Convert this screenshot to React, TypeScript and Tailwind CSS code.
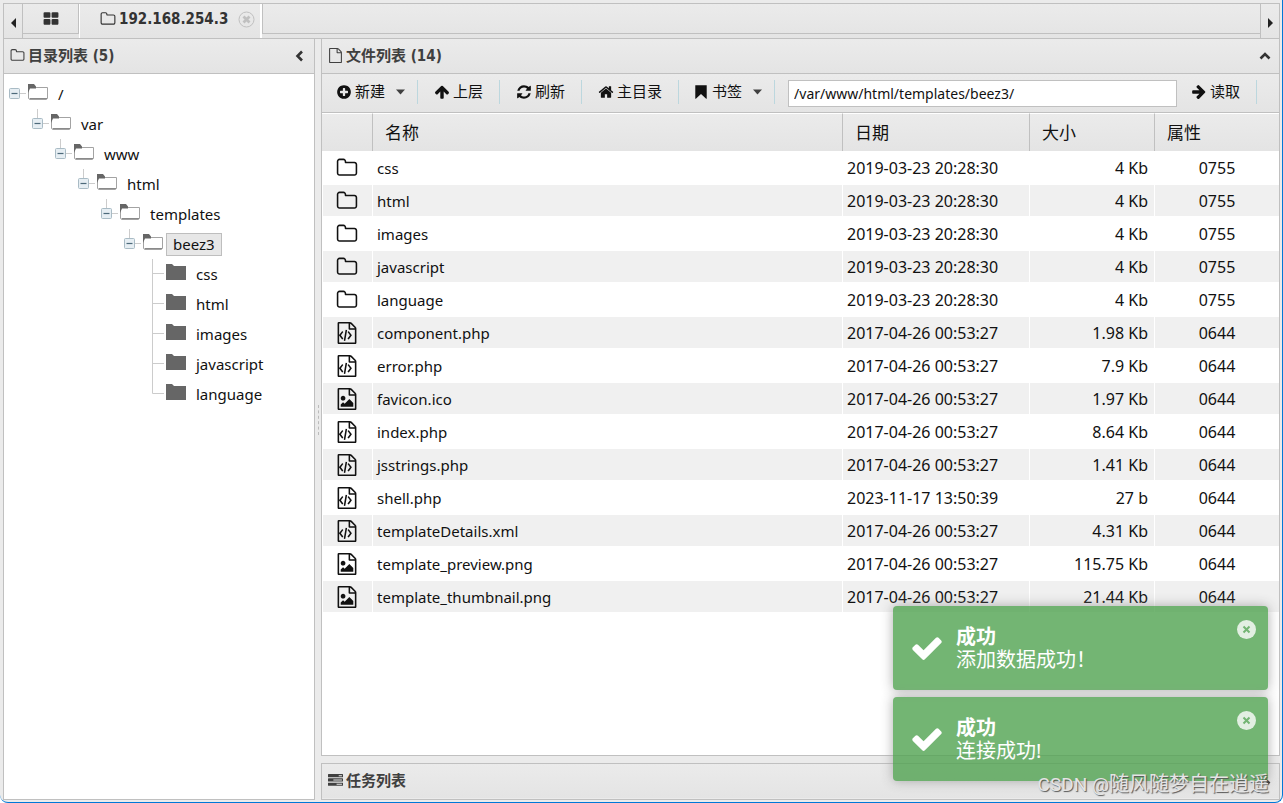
import React, { useState } from 'react'
import type { ReactNode } from 'react'

const FILE_BASE =
  'M1596 380q28 28 48 76t20 88v1152q0 40-28 68t-68 28h-1344q-40 0-68-28t-28-68v-1600q0-40 28-68t68-28h896q40 0 88 20t76 48zm-444-244v376h376q-10-29-22-41l-313-313q-12-12-41-22zm384 1528v-1024h-416q-40 0-68-28t-28-68v-416h-768v1536h1280z'

const ICONS = {
  grid: 'M832 1024v384q0 52-38 90t-90 38h-512q-52 0-90-38t-38-90v-384q0-52 38-90t90-38h512q52 0 90 38t38 90zm0-768v384q0 52-38 90t-90 38h-512q-52 0-90-38t-38-90v-384q0-52 38-90t90-38h512q52 0 90 38t38 90zm896 768v384q0 52-38 90t-90 38h-512q-52 0-90-38t-38-90v-384q0-52 38-90t90-38h512q52 0 90 38t38 90zm0-768v384q0 52-38 90t-90 38h-512q-52 0-90-38t-38-90v-384q0-52 38-90t90-38h512q52 0 90 38t38 90z',
  folder:
    'M1600 1312v-704q0-40-28-68t-68-28h-704q-40 0-68-28t-28-68v-64q0-40-28-68t-68-28h-320q-40 0-68 28t-28 68v960q0 40 28 68t68 28h1216q40 0 68-28t28-68zm128-704v704q0 92-66 158t-158 66h-1216q-92 0-158-66t-66-158v-960q0-92 66-158t158-66h320q92 0 158 66t66 158v32h672q92 0 158 66t66 158z',
  file: FILE_BASE,
  code:
    FILE_BASE +
    'M480 768q8-11 21-12.5t24 6.5l51 38q11 8 12.5 21t-6.5 24l-182 243 182 243q8 11 6.5 24t-12.5 21l-51 38q-11 8-24 6.5t-21-12.5l-226-301q-14-19 0-38zm802 301q14 19 0 38l-226 301q-8 11-21 12.5t-24-6.5l-51-38q-11-8-12.5-21t6.5-24l182-243-182-243q-8-11-6.5-24t12.5-21l51-38q11-8 24-6.5t21 12.5zm-620 461q-13-2-20.5-13t-5.5-24l138-831q2-13 13-20.5t24-5.5l63 10q13 2 20.5 13t5.5 24l-138 831q-2 13-13 20.5t-24 5.5z',
  image:
    FILE_BASE +
    'M1408 1216v320h-1024v-192l192-192 128 128 384-384zM576 1024q-80 0-136-56t-56-136 56-136 136-56 136 56 56 136-56 136-136 56z',
  plus: 'M1344 960v-128q0-26-19-45t-45-19h-256v-256q0-26-19-45t-45-19h-128q-26 0-45 19t-19 45v256h-256q-26 0-45 19t-19 45v128q0 26 19 45t45 19h256v256q0 26 19 45t45 19h128q26 0 45-19t19-45v-256h256q26 0 45-19t19-45zm320-64q0 209-103 385.5t-279.5 279.5-385.5 103-385.5-103-279.5-279.5-103-385.5 103-385.5 279.5-279.5 385.5-103 385.5 103 279.5 279.5 103 385.5z',
  up: 'M1675 971q0 51-37 90l-75 75q-38 38-91 38-54 0-90-38l-294-293v704q0 52-37.5 84.5t-90.5 32.5h-128q-53 0-90.5-32.5t-37.5-84.5v-704l-294 293q-36 38-90 38t-90-38l-75-75q-38-38-38-90 0-53 38-91l651-651q35-37 90-37 54 0 91 37l651 651q37 39 37 91z',
  refresh:
    'M1639 1056q0 5-1 7-64 268-268 434.5t-478 166.5q-146 0-282.5-55t-243.5-157l-129 129q-19 19-45 19t-45-19-19-45v-448q0-26 19-45t45-19h448q26 0 45 19t19 45-19 45l-137 137q71 66 161 102t187 36q134 0 250-65t186-179q11-17 53-117 8-23 30-23h192q13 0 22.5 9.5t9.5 22.5zm25-800v448q0 26-19 45t-45 19h-448q-26 0-45-19t-19-45 19-45l138-138q-148-137-349-137-134 0-250 65t-186 179q-11 17-53 117-8 23-30 23h-199q-13 0-22.5-9.5t-9.5-22.5v-7q65-268 270-434.5t480-166.5q146 0 284 55.5t245 156.5l130-129q19-19 45-19t45 19 19 45z',
  home: 'M1472 992v480q0 26-19 45t-45 19h-384v-384h-256v384h-384q-26 0-45-19t-19-45v-480q0-1 .5-3t.5-3l575-474 575 474q1 2 1 6zm223-69l-62 74q-8 9-21 11h-3q-13 0-21-7l-692-577-692 577q-12 8-24 7-13-2-21-11l-62-74q-8-10-7-23.5t11-21.5l719-599q32-26 76-26t76 26l244 204v-195q0-14 9-23t23-9h192q14 0 23 9t9 23v408l219 182q10 8 11 21.5t-7 23.5z',
  bookmark: 'M256 128h1280v1536h-64l-576-540-576 540h-64z',
  tasks:
    'M1024 1408h640v-128h-640v128zm-384-512h1024v-128h-1024v128zm640-512h384v-128h-384v128zm512 832v256q0 26-19 45t-45 19h-1664q-26 0-45-19t-19-45v-256q0-26 19-45t45-19h1664q26 0 45 19t19 45zm0-512v256q0 26-19 45t-45 19h-1664q-26 0-45-19t-19-45v-256q0-26 19-45t45-19h1664q26 0 45 19t19 45zm0-512v256q0 26-19 45t-45 19h-1664q-26 0-45-19t-19-45v-256q0-26 19-45t45-19h1664q26 0 45 19t19 45z',
  check:
    'M1671 566q0 40-28 68l-724 724-136 136q-28 28-68 28t-68-28l-136-136-362-362q-28-28-28-68t28-68l136-136q28-28 68-28t68 28l294 295 656-657q28-28 68-28t68 28l136 136q28 28 28 68z',
}

type IconName = keyof typeof ICONS

function Icon({ name, className }: { name: IconName; className: string }) {
  return (
    <svg viewBox="0 0 1792 1792" fill="currentColor" fillRule="evenodd" className={`shrink-0 ${className}`}>
      <path d={ICONS[name]} />
    </svg>
  )
}

function Caret() {
  return (
    <svg width="9" height="6" viewBox="0 0 9 6" className="ml-2 shrink-0 text-[#404040]">
      <path d="M0 .5h9L4.500 5.500z" fill="currentColor" />
    </svg>
  )
}

interface TreeNode {
  name: string
  children?: TreeNode[]
}

const tree: TreeNode = {
  name: '/',
  children: [{
    name: 'var',
    children: [{
      name: 'www',
      children: [{
        name: 'html',
        children: [{
          name: 'templates',
          children: [{
            name: 'beez3',
            children: [
              { name: 'css' },
              { name: 'html' },
              { name: 'images' },
              { name: 'javascript' },
              { name: 'language' },
            ],
          }],
        }],
      }],
    }],
  }],
}

interface FileRow {
  icon: IconName
  name: string
  date: string
  size: string
  mode: string
}

const files: FileRow[] = [
  { icon: 'folder', name: 'css', date: '2019-03-23 20:28:30', size: '4 Kb', mode: '0755' },
  { icon: 'folder', name: 'html', date: '2019-03-23 20:28:30', size: '4 Kb', mode: '0755' },
  { icon: 'folder', name: 'images', date: '2019-03-23 20:28:30', size: '4 Kb', mode: '0755' },
  { icon: 'folder', name: 'javascript', date: '2019-03-23 20:28:30', size: '4 Kb', mode: '0755' },
  { icon: 'folder', name: 'language', date: '2019-03-23 20:28:30', size: '4 Kb', mode: '0755' },
  { icon: 'code', name: 'component.php', date: '2017-04-26 00:53:27', size: '1.98 Kb', mode: '0644' },
  { icon: 'code', name: 'error.php', date: '2017-04-26 00:53:27', size: '7.9 Kb', mode: '0644' },
  { icon: 'image', name: 'favicon.ico', date: '2017-04-26 00:53:27', size: '1.97 Kb', mode: '0644' },
  { icon: 'code', name: 'index.php', date: '2017-04-26 00:53:27', size: '8.64 Kb', mode: '0644' },
  { icon: 'code', name: 'jsstrings.php', date: '2017-04-26 00:53:27', size: '1.41 Kb', mode: '0644' },
  { icon: 'code', name: 'shell.php', date: '2023-11-17 13:50:39', size: '27 b', mode: '0644' },
  { icon: 'code', name: 'templateDetails.xml', date: '2017-04-26 00:53:27', size: '4.31 Kb', mode: '0644' },
  { icon: 'image', name: 'template_preview.png', date: '2017-04-26 00:53:27', size: '115.75 Kb', mode: '0644' },
  { icon: 'image', name: 'template_thumbnail.png', date: '2017-04-26 00:53:27', size: '21.44 Kb', mode: '0644' },
]

// guide lines plus the collapse box in front of a node
function Connector({ leaf, last, root }: { leaf: boolean; last: boolean; root: boolean }) {
  return (
    <svg width="19" height="30" viewBox="0 0 19 30" className="shrink-0">
      {!root && <path d={last ? 'M5.500 -1V14.500' : 'M5.500 -1V30'} stroke="#ccc" fill="none" />}
      <path d={leaf ? 'M5.500 14.500H17' : 'M11 14.500H17'} stroke="#ccc" fill="none" />
      {!leaf && (
        <>
          <rect x=".5" y="9.500" width="10" height="10" rx="1" fill="#e6eef3" stroke="#a9bbc5" />
          <path d="M2.500 14.500h6" stroke="#4d6a7a" strokeWidth="1.200" />
        </>
      )}
    </svg>
  )
}

function TreeFolder({ open }: { open: boolean }) {
  return (
    <svg width="20" height="16" viewBox="0 0 20 16" className="mb-1 shrink-0">
      {open ? (
        <>
          <path d="M.5 1V14.500L1.500 15.500H18.500L19.500 14.500V3.500H2" fill="#fff" stroke="#a3a3a3" />
          <path d="M1.500 14.500H19" stroke="#8a8a8a" />
          <path d="M0 0h6l2 2.500v2H2L0 9z" fill="#666" />
        </>
      ) : (
        <path d="M0 0h6l2 2h12v14H0z" fill="#666" />
      )}
    </svg>
  )
}

function TreeItem({ node, level, last }: { node: TreeNode; level: number; last: boolean }) {
  const leaf = !node.children
  const selected = node.name === 'beez3'
  return (
    <li>
      <div className="flex h-[30px] items-center" style={{ paddingLeft: 5 + level * 23 }}>
        <Connector leaf={leaf} last={last} root={level === 0} />
        <TreeFolder open={!leaf} />
        <button
          className={`ml-[3px] h-[23px] border px-[6px] text-[15px] leading-[21px] ${
            selected ? 'border-[#bebebe] bg-[#e7e7e7]' : 'border-transparent'
          }`}
        >
          {node.name}
        </button>
      </div>
      {node.children && (
        <ul>
          {node.children.map((child, i) => (
            <TreeItem key={child.name} node={child} level={level + 1} last={i === node.children!.length - 1} />
          ))}
        </ul>
      )}
    </li>
  )
}

function PanelHeader({ icon, title, arrow }: { icon: IconName; title: string; arrow: string }) {
  return (
    <header className="flex h-[34px] shrink-0 items-center bg-linear-to-b from-[#ebebeb] to-[#e4e4e4] pr-[7px] pb-px pl-[6px] text-[#404040]">
      <Icon name={icon} className="size-[15px]" />
      <h2 className="ml-[3px] font-['DejaVu_Sans_Condensed','Noto_Sans_CJK_SC',sans-serif] text-[15px] leading-5 font-bold">
        {title}
      </h2>
      <button className="ml-auto" aria-label="toggle panel">
        <svg width="14" height="14" viewBox="0 0 14 14" fill="none" stroke="#333" strokeWidth="2.600">
          <path d={arrow} />
        </svg>
      </button>
    </header>
  )
}

function ToolButton({ icon, iconClass = 'size-4', caret, children }: {
  icon: IconName
  iconClass?: string
  caret?: boolean
  children: ReactNode
}) {
  return (
    <button
      className={`flex h-6 items-center gap-[3px] border-r border-[#bcd7de] pb-px text-[15px] ${caret ? 'pr-3 pl-[14px]' : 'px-4'}`}
    >
      <Icon name={icon} className={iconClass} />
      {children}
      {caret && <Caret />}
    </button>
  )
}

function Toast({ message, onClose }: { message: string; onClose: () => void }) {
  return (
    <div className="flex h-[84px] w-[375px] rounded-[4px] bg-[#51a351] pr-3 pl-[17px] text-xl leading-[23px] text-white opacity-80 shadow-[0_0_12px_#999]">
      <Icon name="check" className="mt-[25px] size-[34px]" />
      <div className="mt-[19px] ml-3 flex-1">
        <p className="font-bold">成功</p>
        <p>{message}</p>
      </div>
      <button onClick={onClose} aria-label="close" className="mt-[14px] size-[19px] opacity-80">
        <svg viewBox="0 0 19 19">
          <circle cx="9.500" cy="9.500" r="9.500" fill="#fff" />
          <path d="M6.500 6.500l6 6M12.500 6.500l-6 6" stroke="#51a351" strokeWidth="2" />
        </svg>
      </button>
    </div>
  )
}

export default function App() {
  const [path, setPath] = useState('/var/www/html/templates/beez3/')
  const [toasts, setToasts] = useState(['添加数据成功！', '连接成功!'])

  return (
    <div className="relative flex h-screen flex-col overflow-hidden rounded-b-lg border-r border-b border-[#0078d7] bg-[#ebebeb] pt-[3px] pr-[2px] pb-[2px] pl-[3px] font-['Noto_Sans','Noto_Sans_CJK_SC',sans-serif] text-[16px] text-[#111]">
      <nav className="flex h-9 shrink-0 border border-[#c0c0c0] bg-linear-to-b from-[#ebebeb] to-[#e4e4e4]">
        <button aria-label="scroll left" className="flex w-[19px] items-center justify-center border-r border-[#c0c0c0] pt-[3px]">
          <svg width="5" height="10" viewBox="0 0 5 10"><path d="M5 0v10L0 5z" fill="#222" /></svg>
        </button>
        <button aria-label="home" className="mb-1 flex w-14 items-center justify-center border-r border-b border-[#c0c0c0] text-[#333]">
          <Icon name="grid" className="size-4" />
        </button>
        <div className="flex items-center border-r-2 border-l border-white pr-[5px] pb-1 pl-5 text-[#333]">
          <Icon name="folder" className="size-4" />
          <span className="ml-[3px] font-['DejaVu_Sans_Condensed',sans-serif] text-[15px] font-bold">192.168.254.3</span>
          <button aria-label="close tab" className="ml-[10px]">
            <svg width="17" height="17" viewBox="0 0 17 17" fill="none" stroke="#c0c0c0">
              <circle cx="8.500" cy="8.500" r="7.500" />
              <path d="M5.500 5.500l6 6M11.500 5.500l-6 6" strokeWidth="2.800" />
            </svg>
          </button>
        </div>
        <div className="mb-1 flex-1 border-b border-l border-[#c0c0c0]" />
        <button aria-label="scroll right" className="flex w-[19px] items-center justify-center border-l border-[#c0c0c0] pt-[3px]">
          <svg width="5" height="10" viewBox="0 0 5 10"><path d="M0 0v10l5-5z" fill="#222" /></svg>
        </button>
      </nav>

      <div className="flex min-h-0 flex-1">
        <aside className="flex w-[312px] shrink-0 flex-col border-x border-b border-[#c0c0c0] bg-white">
          <PanelHeader icon="folder" title="目录列表 (5)" arrow="M9 2.500L4.500 7L9 11.500" />
          <ul className="flex-1 border-t border-[#c0c0c0] pt-[5px]">
            <TreeItem node={tree} level={0} last />
          </ul>
        </aside>

        <div className="flex w-[6px] shrink-0 items-center justify-center">
          <div className="h-[30px] border-l border-dashed border-[#bbb]" />
        </div>

        <main className="flex min-w-0 flex-1 flex-col gap-[7px]">
          <section className="flex min-h-0 flex-1 flex-col border-x border-b border-[#c0c0c0] bg-white">
            <PanelHeader icon="file" title="文件列表 (14)" arrow="M2.500 9.500L7 5L11.500 9.500" />
            <div className="flex h-10 shrink-0 items-start border-y border-[#c0c0c0] bg-linear-to-b from-[#ebebeb] to-[#e4e4e4] pt-[6px]">
              <ToolButton icon="plus" caret>新建</ToolButton>
              <ToolButton icon="up">上层</ToolButton>
              <ToolButton icon="refresh">刷新</ToolButton>
              <ToolButton icon="home">主目录</ToolButton>
              <ToolButton icon="bookmark" caret>书签</ToolButton>
              <input
                aria-label="path"
                value={path}
                onChange={(e) => setPath(e.target.value)}
                className="mr-[-2px] ml-[13px] h-[27px] min-w-0 flex-1 border border-[#c0c0c0] bg-white px-[5px] text-[14px] outline-none"
              />
              <ToolButton icon="up" iconClass="size-4 rotate-90">读取</ToolButton>
              <div className="w-[22px]" />
            </div>
            <div className="min-h-0 flex-1 overflow-hidden">
              <table className="w-full table-fixed border-separate border-spacing-0">
                <colgroup>
                  <col className="w-[51px]" />
                  <col />
                  <col className="w-[187px]" />
                  <col className="w-[125px]" />
                  <col className="w-[124px]" />
                </colgroup>
                <thead>
                  <tr className="h-[38px] text-left text-[17px]">
                    {['', '名称', '日期', '大小', '属性'].map((label, i) => (
                      <th
                        key={i}
                        className="border-t border-r border-t-white border-r-[#c0c0c0] bg-linear-to-b from-[#ebebeb] to-[#e4e4e4] py-0 pl-3 leading-6 font-normal last:border-r-0"
                      >
                        {label}
                      </th>
                    ))}
                  </tr>
                </thead>
                <tbody>
                  {files.map((file) => (
                    <tr
                      key={file.name}
                      className="h-[33px] leading-5 even:bg-[#f0f0f0] *:border-y *:border-r *:border-white *:py-0 *:last:border-r-0"
                    >
                      <td className="border-l pl-[13px]">
                        <Icon name={file.icon} className="size-[22px]" />
                      </td>
                      <td className="pl-1 text-[15px]">{file.name}</td>
                      <td className="pl-1">{file.date}</td>
                      <td className="pr-[6px] text-right">{file.size}</td>
                      <td className="text-center">{file.mode}</td>
                    </tr>
                  ))}
                </tbody>
              </table>
            </div>
          </section>
          <section className="border border-[#c0c0c0] pb-px">
            <PanelHeader icon="tasks" title="任务列表" arrow="M2.500 9.500L7 5L11.500 9.500" />
          </section>
        </main>
      </div>

      <div className="absolute right-[14px] bottom-[21px] flex flex-col gap-[7px]">
        {toasts.map((message) => (
          <Toast key={message} message={message} onClose={() => setToasts(toasts.filter((t) => t !== message))} />
        ))}
      </div>

      <p className="absolute right-[13px] bottom-[3px] text-xl leading-7 whitespace-nowrap text-[#e4e4e4] [text-shadow:1px_1px_1px_#555]">
        <span className="font-[Roboto] text-[19px]">CSDN @</span>随风随梦自在逍遥
      </p>
    </div>
  )
}
